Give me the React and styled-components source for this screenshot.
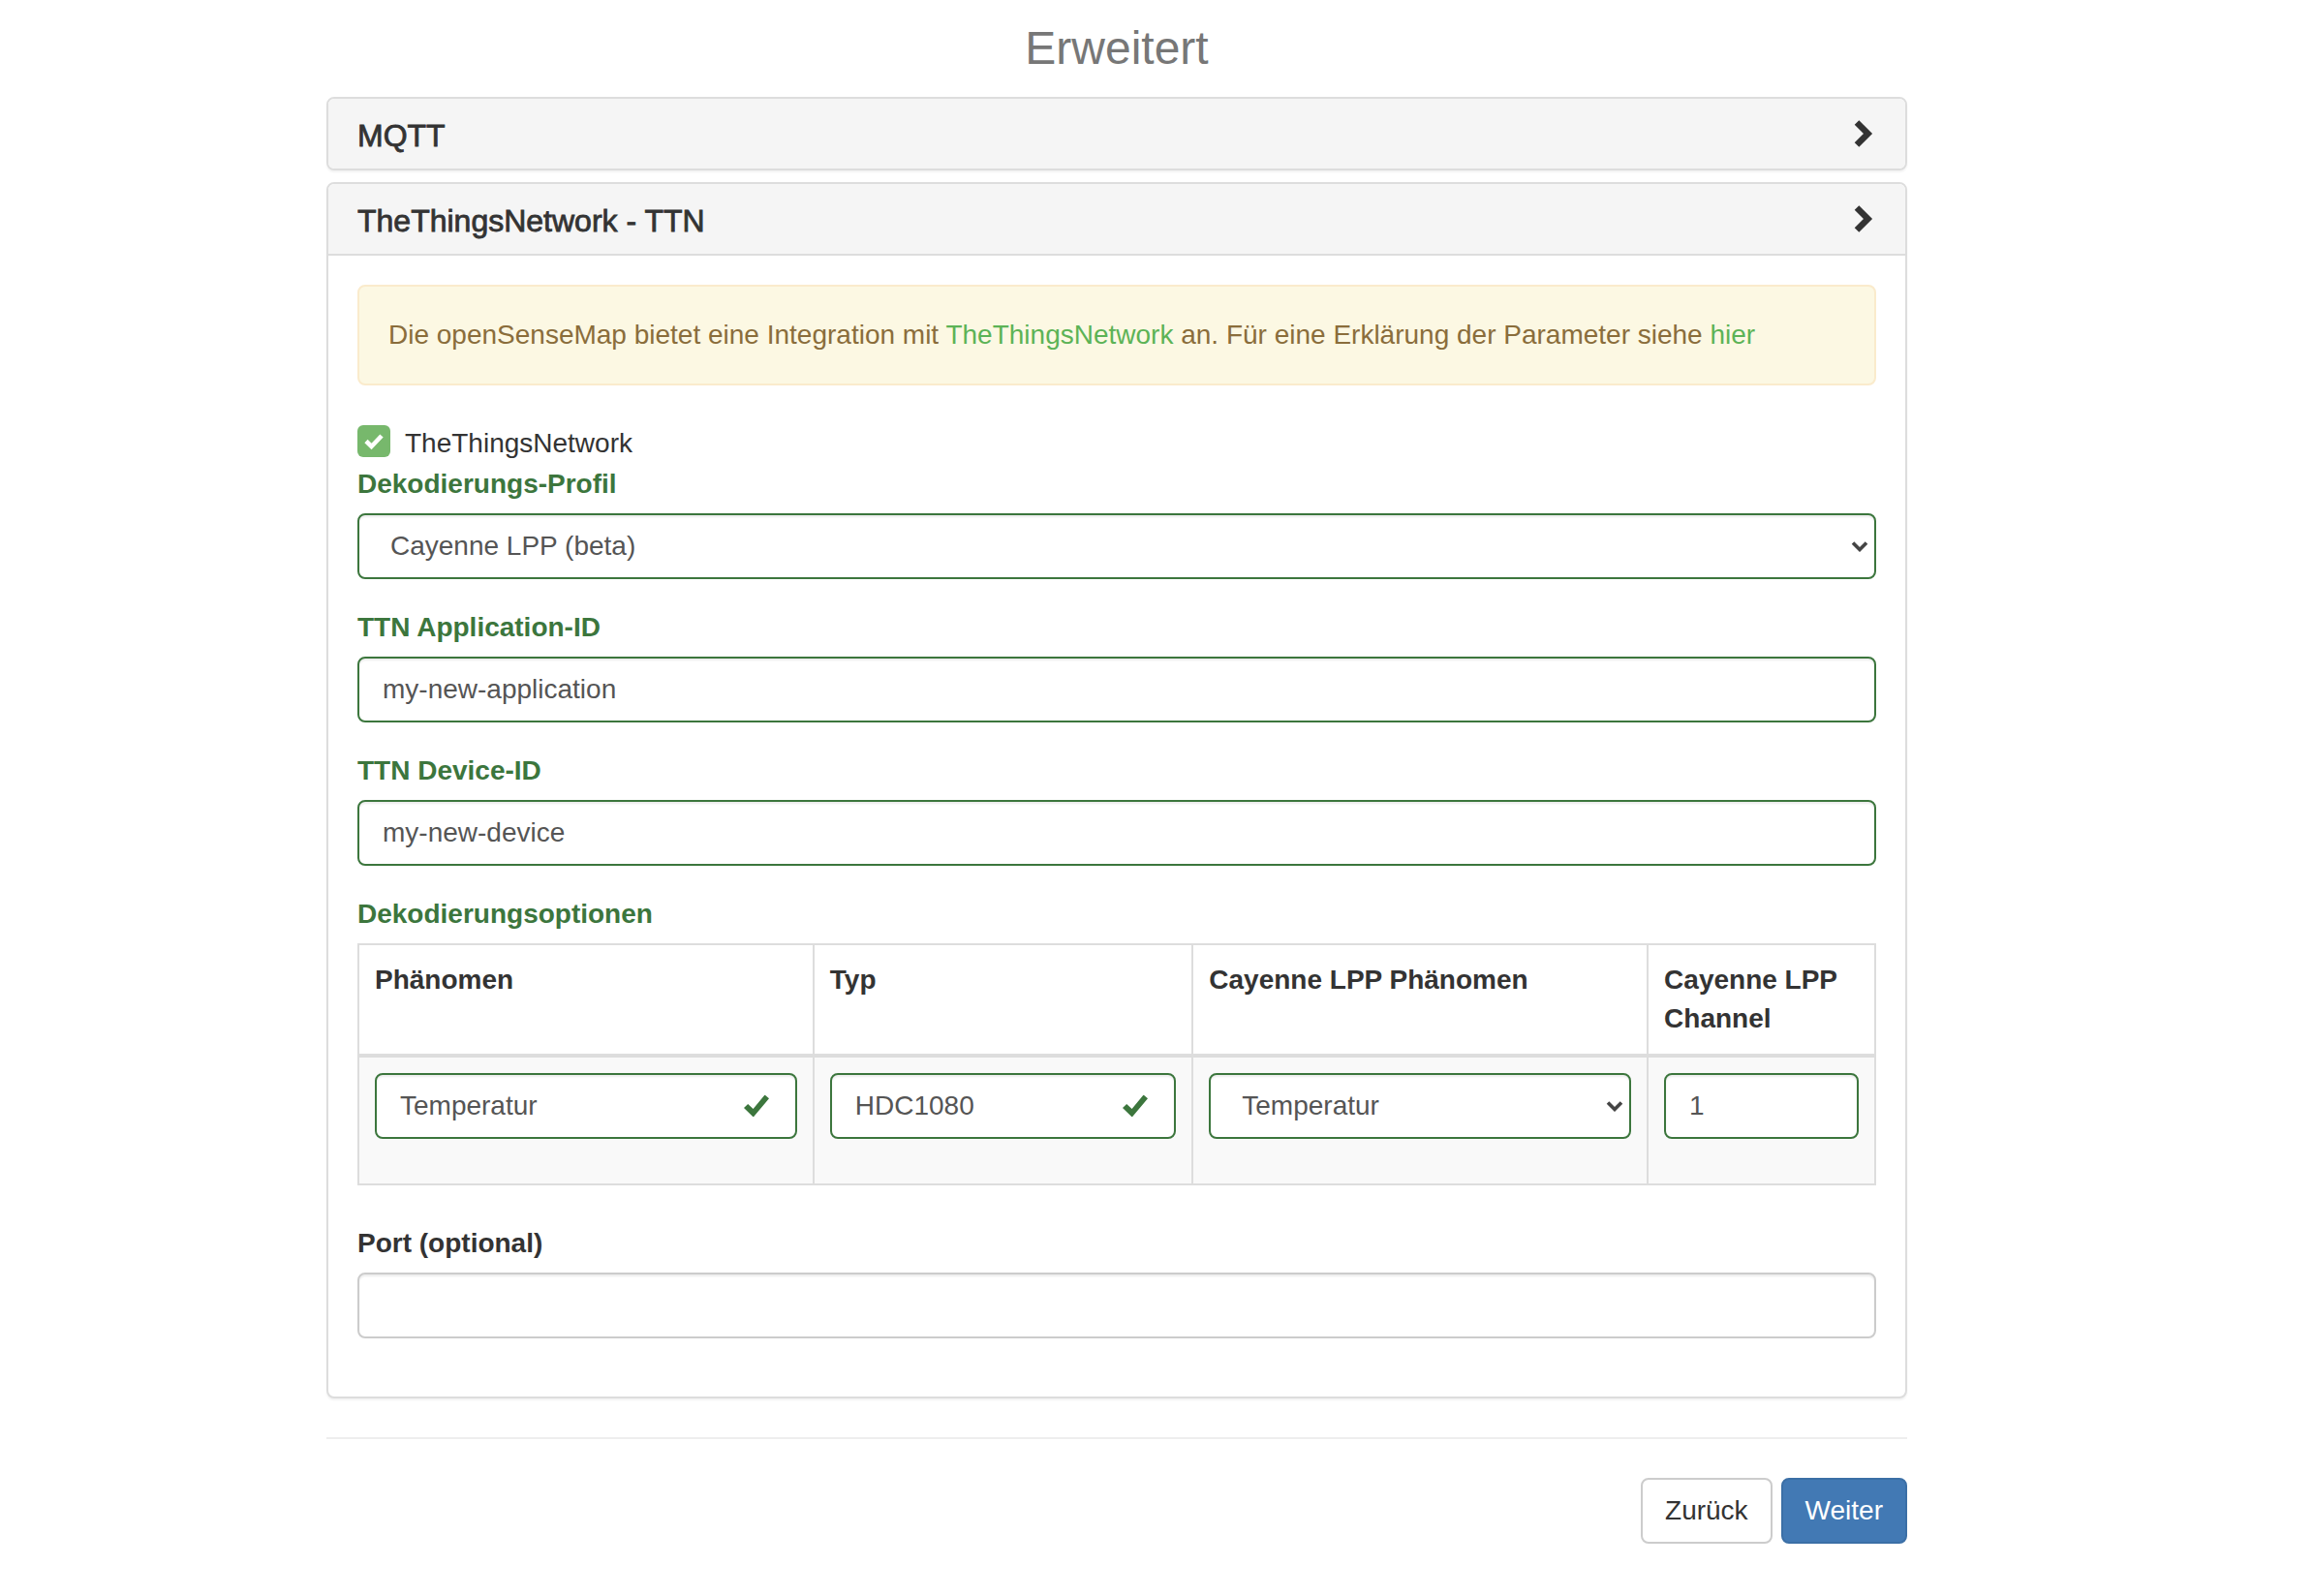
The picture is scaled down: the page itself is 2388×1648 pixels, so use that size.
import React from "react";
import styled, { createGlobalStyle } from "styled-components";

const GlobalStyle = createGlobalStyle`
  *, *::before, *::after {
    box-sizing: border-box;
  }
  body {
    margin: 0;
    background: #fff;
    color: #333;
    font-family: "Liberation Sans", Arial, Helvetica, sans-serif;
    font-size: 28px;
    line-height: 40px;
  }
`;

const GREEN = "#3c763d";

const ChevronRight = () => (
  <svg width="22" height="30" viewBox="0 0 22 30">
    <polyline points="4,3.5 15.5,15 4,26.5" fill="none" stroke="#333" strokeWidth="6.5" />
  </svg>
);

const SelectArrow = () => (
  <svg width="18" height="12" viewBox="0 0 18 12">
    <polyline points="2,2.5 9,9.5 16,2.5" fill="none" stroke="#444" strokeWidth="3.6" />
  </svg>
);

const OkIcon = () => (
  <svg width="26" height="23" viewBox="0 0 26 23">
    <path d="M0 13.5 L4.2 9.4 L9.6 14.6 L21.6 0 L26 3.8 L9.8 23 Z" fill={GREEN} />
  </svg>
);

const Check = () => (
  <svg width="34" height="33" viewBox="0 0 34 33">
    <polyline points="9,16.5 14.5,22 25,11" fill="none" stroke="#fff" strokeWidth="4.6" />
  </svg>
);

const Account = () => {
  return (
    <Page>
      <GlobalStyle />
      <Title>Erweitert</Title>
      <PanelGroup>
        <Panel>
          <PanelHeading>
            <PanelTitle>MQTT</PanelTitle>
            <ChevronRight />
          </PanelHeading>
        </Panel>
        <Panel>
          <PanelHeading $open>
            <PanelTitle>TheThingsNetwork - TTN</PanelTitle>
            <ChevronRight />
          </PanelHeading>
          <PanelBody>
            <Alert>
              Die openSenseMap bietet eine Integration mit <Link>TheThingsNetwork</Link> an. Für eine
              Erklärung der Parameter siehe <Link>hier</Link>
            </Alert>

            <CheckRow>
              <CheckBox>
                <Check />
              </CheckBox>
              TheThingsNetwork
            </CheckRow>

            <FormGroup>
              <Label $success>Dekodierungs-Profil</Label>
              <SelectWrap>
                <Select $success defaultValue="lpp">
                  <option value="lpp">Cayenne LPP (beta)</option>
                </Select>
                <ArrowSlot>
                  <SelectArrow />
                </ArrowSlot>
              </SelectWrap>
            </FormGroup>

            <FormGroup>
              <Label $success>TTN Application-ID</Label>
              <Input $success readOnly value="my-new-application" />
            </FormGroup>

            <FormGroup>
              <Label $success>TTN Device-ID</Label>
              <Input $success readOnly value="my-new-device" />
            </FormGroup>

            <Label $success>Dekodierungsoptionen</Label>
            <Table>
              <colgroup>
                <Col $w="30%" />
                <Col $w="25%" />
                <Col $w="30%" />
                <Col $w="15%" />
              </colgroup>
              <thead>
                <tr>
                  <Th>Phänomen</Th>
                  <Th>Typ</Th>
                  <Th>Cayenne LPP Phänomen</Th>
                  <Th>Cayenne LPP Channel</Th>
                </tr>
              </thead>
              <tbody>
                <tr>
                  <Td>
                    <FormGroup>
                      <Feedback>
                        <Input $success $feedback readOnly value="Temperatur" />
                        <IconSlot>
                          <OkIcon />
                        </IconSlot>
                      </Feedback>
                    </FormGroup>
                  </Td>
                  <Td>
                    <FormGroup>
                      <Feedback>
                        <Input $success $feedback readOnly value="HDC1080" />
                        <IconSlot>
                          <OkIcon />
                        </IconSlot>
                      </Feedback>
                    </FormGroup>
                  </Td>
                  <Td>
                    <FormGroup>
                      <SelectWrap>
                        <Select $success defaultValue="temp">
                          <option value="temp">Temperatur</option>
                        </Select>
                        <ArrowSlot>
                          <SelectArrow />
                        </ArrowSlot>
                      </SelectWrap>
                    </FormGroup>
                  </Td>
                  <Td>
                    <FormGroup>
                      <Input $success readOnly value="1" />
                    </FormGroup>
                  </Td>
                </tr>
              </tbody>
            </Table>

            <FormGroup>
              <Label>Port (optional)</Label>
              <Input readOnly value="" />
            </FormGroup>
          </PanelBody>
        </Panel>
      </PanelGroup>

      <Rule />

      <Actions>
        <Button>Zurück</Button>
        <Button $primary>Weiter</Button>
      </Actions>
    </Page>
  );
};

export default Account;

const Page = styled.main`
  width: 1632px;
  margin-left: 337px;
  padding: 23px 0 40px;
`;

const Title = styled.h3`
  margin: 0 0 24px;
  text-align: center;
  font-size: 48px;
  line-height: 53px;
  font-weight: 400;
  color: #777;
`;

const PanelGroup = styled.div`
  display: flex;
  flex-direction: column;
  gap: 12px;
`;

const Panel = styled.section`
  border: 2px solid #ddd;
  border-radius: 8px;
  background: #fff;
  box-shadow: 0 2px 2px rgba(0, 0, 0, 0.05);
  overflow: hidden;
`;

const PanelHeading = styled.div`
  display: flex;
  align-items: center;
  justify-content: space-between;
  height: ${(p) => (p.$open ? "74px" : "72px")};
  padding: 3px 30px 0 30px;
  background: #f5f5f5;
  border-bottom: ${(p) => (p.$open ? "2px solid #ddd" : "none")};
  svg {
    margin-top: -3px;
    margin-right: 2px;
  }
`;

const PanelTitle = styled.h4`
  margin: 0;
  font-size: 32px;
  line-height: 36px;
  font-weight: 400;
  color: #333;
  -webkit-text-stroke: 0.8px #333;
`;

const PanelBody = styled.div`
  padding: 30px;
`;

const Alert = styled.div`
  margin-bottom: 40px;
  padding: 30px;
  border: 2px solid #faebcc;
  border-radius: 8px;
  background: #fcf8e3;
  color: #8a6d3b;
`;

const Link = styled.a`
  color: #5cb356;
  text-decoration: none;
`;

const CheckRow = styled.label`
  display: flex;
  align-items: flex-start;
  gap: 15px;
  height: 40px;
  margin-bottom: 2px;
  color: #333;
`;

const CheckBox = styled.span`
  display: flex;
  width: 34px;
  height: 33px;
  margin-top: 1px;
  border-radius: 6px;
  background: #77b86c;
`;

const FormGroup = styled.div`
  margin-bottom: 30px;
`;

const Label = styled.label`
  display: block;
  margin-bottom: 10px;
  font-weight: 700;
  color: ${(p) => (p.$success ? GREEN : "#333")};
`;

const fieldBase = `
  display: block;
  width: 100%;
  height: 68px;
  margin: 0;
  border-radius: 8px;
  background: #fff;
  color: #555;
  font-family: "Liberation Sans", Arial, Helvetica, sans-serif;
  font-size: 28px;
  line-height: 40px;
  box-shadow: inset 0 2px 2px rgba(0, 0, 0, 0.075);
  outline: none;
`;

const Input = styled.input`
  ${fieldBase}
  padding: 0 ${(p) => (p.$feedback ? "85px" : "24px")} 0 24px;
  border: 2px solid ${(p) => (p.$success ? GREEN : "#ccc")};
`;

const SelectWrap = styled.div`
  position: relative;
`;

const Select = styled.select`
  ${fieldBase}
  appearance: none;
  -webkit-appearance: none;
  padding: 0 40px 0 32px;
  border: 2px solid ${(p) => (p.$success ? GREEN : "#ccc")};
`;

const ArrowSlot = styled.span`
  position: absolute;
  top: 50%;
  right: 8px;
  display: flex;
  transform: translateY(-50%);
  pointer-events: none;
`;

const Feedback = styled.div`
  position: relative;
`;

const IconSlot = styled.span`
  position: absolute;
  top: 50%;
  right: 29px;
  display: flex;
  transform: translateY(-50%);
  pointer-events: none;
`;

const Table = styled.table`
  width: 100%;
  margin-bottom: 40px;
  border-collapse: collapse;
  border: 2px solid #ddd;
  table-layout: fixed;
`;

const Col = styled.col`
  width: ${(p) => p.$w};
`;

const Th = styled.th`
  padding: 16px;
  border: 2px solid #ddd;
  border-bottom-width: 4px;
  text-align: left;
  vertical-align: top;
  font-weight: 700;
  line-height: 40px;
  color: #333;
`;

const Td = styled.td`
  padding: 16px;
  border: 2px solid #ddd;
  vertical-align: top;
  background: #f9f9f9;
`;

const Rule = styled.hr`
  margin: 40px 0;
  border: 0;
  border-top: 2px solid #eee;
`;

const Actions = styled.div`
  display: flex;
  justify-content: flex-end;
  gap: 9px;
`;

const Button = styled.button`
  height: 68px;
  padding: 0 23px;
  border: 2px solid ${(p) => (p.$primary ? "#3b6fa6" : "#ccc")};
  border-radius: 8px;
  background: ${(p) => (p.$primary ? "#4279b4" : "#fff")};
  color: ${(p) => (p.$primary ? "#fff" : "#333")};
  font-family: "Liberation Sans", Arial, Helvetica, sans-serif;
  font-size: 28px;
  line-height: 40px;
  cursor: pointer;
`;
